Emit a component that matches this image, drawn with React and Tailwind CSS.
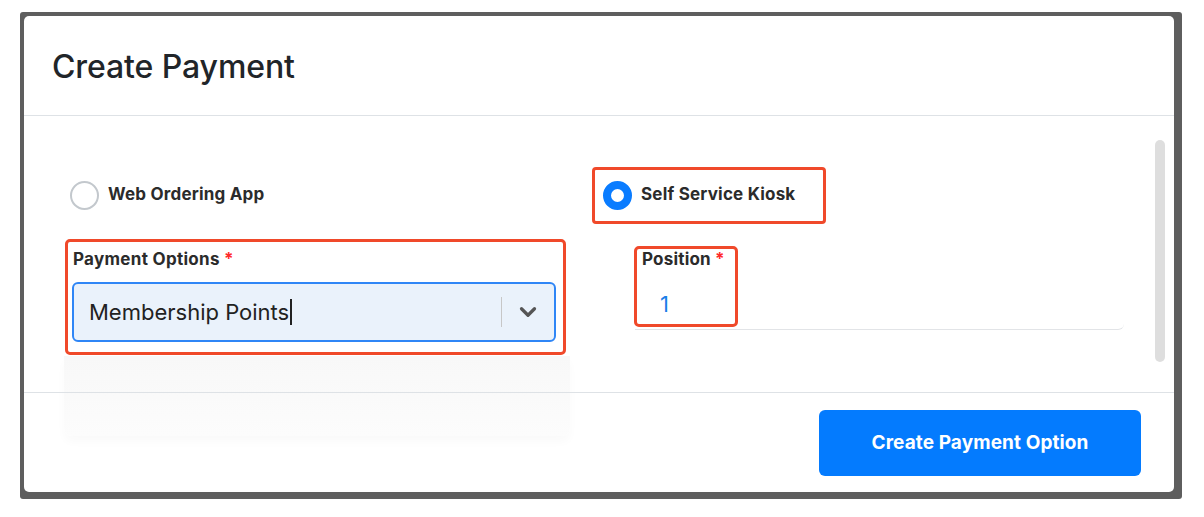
import React from 'react';
import { ChevronDown } from 'lucide-react';

const font = { fontFamily: 'Inter, "Liberation Sans", Arial, sans-serif' };

function Radio({ checked, label }) {
    return (
        <label className="flex items-center gap-[9px]">
            {checked ? (
                <span className="w-[29px] h-[29px] rounded-full border-[8px] border-[#0a7cff] bg-white" />
            ) : (
                <span className="w-[29px] h-[29px] rounded-full border-2 border-[#c3c8cd] bg-white" />
            )}
            <span className="text-[17px] font-bold text-[#2b2b2b] tracking-[0.2px] -mt-[1px]">{label}</span>
        </label>
    );
}

export default function App() {
    return (
        <div className="w-[1204px] h-[517px] bg-white pt-[12px] pl-[20px]" style={font}>
            <div className="w-[1162px] h-[487px] bg-[#5e5e5e] rounded-[3px] pt-[4px] pl-[4px] pr-[8px] pb-[7px]">
                <div className="relative h-full bg-white rounded-[5px] flex flex-col overflow-hidden">
                    {/* header */}
                    <div className="h-[100px] border-b border-[#dee2e6] flex items-center px-[28px] shrink-0">
                        <h1 className="text-[32px] font-medium text-[#212529] tracking-[-0.1px] mt-[2px]">Create Payment</h1>
                    </div>

                    {/* body */}
                    <div className="relative h-[276px] shrink-0 pl-[41px] pt-[51px]">
                        <div className="flex gap-[26px]">
                            <div className="w-[501px] h-[57px] flex items-center pl-[5px]">
                                <Radio label="Web Ordering App" />
                            </div>
                            <div className="w-[234px] h-[57px] border-[3px] border-[#f0492a] rounded-[4px] flex items-center pl-[8px]">
                                <Radio checked label="Self Service Kiosk" />
                            </div>
                        </div>

                        <div className="flex gap-[26px] mt-[15px]">
                            <div className="w-[501px] h-[116px] border-[3px] border-[#f0492a] rounded-[5px] px-[5px] pt-[7px]">
                                <div className="text-[17px] font-bold text-[#2b2b2b] leading-[20px] tracking-[0.3px]">
                                    Payment Options <span className="text-[#ff2a2a]">*</span>
                                </div>
                                <div className="mt-[13px] -ml-[1px] h-[60px] w-[484px] rounded-[6px] border-2 border-[#2f86f6] bg-[#eaf2fb] flex items-center">
                                    <div className="flex-1 pl-[15px] text-[22px] text-[#222] flex items-center">
                                        Membership Points<span className="w-[1.5px] h-[26px] bg-[#222] ml-[1px]" />
                                    </div>
                                    <div className="w-px h-[30px] bg-[#c7c7c7]" />
                                    <div className="w-[52px] flex justify-center text-[#555]">
                                        <ChevronDown size={26} strokeWidth={3} />
                                    </div>
                                </div>
                            </div>
                            <div className="relative ml-[42px] w-[490px]">
                                <div className="absolute left-[1px] top-[81px] w-[489px] h-[10px] border-b border-[#e2e4e7] rounded-br-[6px]" />
                                <div className="relative mt-[7px] w-[104px] h-[81px] border-[3px] border-[#f0492a] rounded-[5px] px-[5px]">
                                    <div className="text-[17px] font-bold text-[#2b2b2b] leading-[20px] tracking-[0.2px]">
                                        Position <span className="text-[#ff2a2a]">*</span>
                                    </div>
                                    <div className="mt-[22px] pl-[18px] text-[22px] text-[#1a7fe8] leading-[26px]">1</div>
                                </div>
                            </div>
                        </div>

                        {/* scrollbar */}
                        <div className="absolute right-[9px] top-[24px] w-[10px] h-[222px] rounded-full bg-[#dedede]" />
                    </div>

                    {/* faint menu shadow below the select */}
                    <div className="absolute left-[40px] top-[340px] w-[506px] h-[80px] rounded-b-[8px] bg-gradient-to-b from-[#f8f8f8] to-[#fcfcfc] opacity-90 shadow-[0_6px_10px_rgba(0,0,0,0.025)] pointer-events-none" />

                    {/* footer */}
                    <div className="relative flex-1 border-t border-[#dee2e6] flex justify-end items-start pt-[17px] pr-[33px]">
                        <button className="w-[322px] h-[66px] rounded-[6px] bg-[#047bfe] text-white text-[19px] font-bold tracking-[0.1px] pt-[1px]">
                            Create Payment Option
                        </button>
                    </div>
                </div>
            </div>
        </div>
    );
}
